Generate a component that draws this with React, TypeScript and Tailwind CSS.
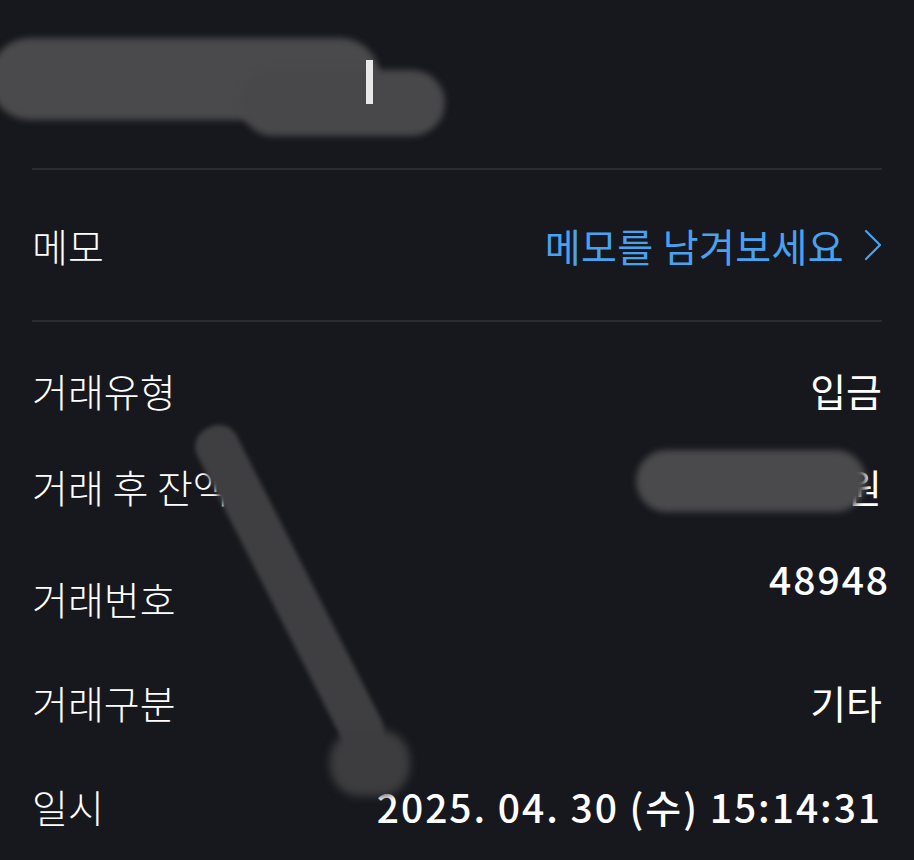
import React from 'react';

const font = { fontFamily: '"Noto Sans CJK KR", "Noto Sans", sans-serif' };

function Row({ label, children, className = '' }: { label: string; children: React.ReactNode; className?: string }) {
  return (
    <div className={`flex items-center justify-between h-[104px] ${className}`}>
      <span className="text-[39px] font-light text-white">{label}</span>
      {children}
    </div>
  );
}

export default function App() {
  return (
    <div className="relative w-[914px] h-[860px] overflow-hidden bg-[#17181d] text-white" style={font}>
      <div className="h-[168px]" />
      <div className="mx-8 h-[2px] bg-[#2b2c31]" />

      <div className="px-8 flex items-center justify-between h-[150px]">
        <span className="text-[39px] font-light text-white">메모</span>
        <div className="flex items-center gap-5 text-[#4aa2ef]">
          <span className="text-[39px] font-normal tracking-[0.01em]">메모를 남겨보세요</span>
          <svg width="18" height="32" viewBox="0 0 18 32" fill="none">
            <path d="M2 2 L16 16 L2 30" stroke="currentColor" strokeWidth="2.2" strokeLinecap="round" strokeLinejoin="round" />
          </svg>
        </div>
      </div>
      <div className="mx-8 h-[2px] bg-[#2b2c31]" />

      <div className="px-8 pt-4">
        <Row label="거래유형">
          <span className="text-[39px] font-normal">입금</span>
        </Row>
        <Row label="거래 후 잔액" className="-mt-2">
          <span className="text-[39px] font-normal">원</span>
        </Row>
        <Row label="거래번호" className="mt-2">
          <span className="text-[39px] font-medium -mt-10 -mr-2 tracking-wider">48948</span>
        </Row>
        <Row label="거래구분">
          <span className="text-[39px] font-normal">기타</span>
        </Row>
        <Row label="일시">
          <span className="text-[39px] font-medium tracking-wider">2025. 04. 30 (수) 15:14:31</span>
        </Row>
      </div>

      {/* redaction smudges */}
      <div className="absolute left-[-10px] top-[38px] w-[390px] h-[82px] rounded-[40px] bg-[#4a4a4c] blur-[3px]" />
      <div className="absolute left-[240px] top-[70px] w-[205px] h-[66px] rounded-[40px] bg-[#48484a] blur-[3px]" />
      <div className="absolute left-[366px] top-[60px] w-[7px] h-[44px] bg-[#e8e8e8]" />
      <div className="absolute left-[636px] top-[450px] w-[230px] h-[62px] rounded-[40px] bg-[#4a4a4c] blur-[3px]" />
      <div className="absolute left-[186px] top-[428px] w-[44px] h-[360px] origin-top -rotate-[27deg] rounded-[20px] bg-[#3f3f41] blur-[2px]" />
      <div className="absolute left-[330px] top-[730px] w-[80px] h-[66px] rounded-[30px] bg-[#3d3d3f] blur-[4px]" />
    </div>
  );
}
